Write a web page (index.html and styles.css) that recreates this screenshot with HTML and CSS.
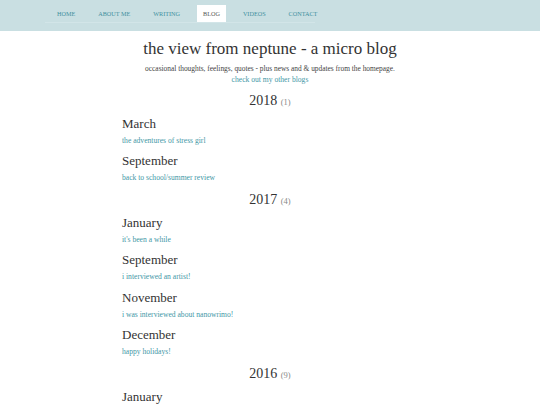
FILE: index.html
```html
<!DOCTYPE html>
<html>
<head>
<meta charset="utf-8">
<link rel="stylesheet" href="styles.css">
</head>
<body>
<div class="navbar">
  <ul class="nav">
    <li><a href="#">Home</a></li>
    <li><a href="#">About me</a></li>
    <li><a href="#">Writing</a></li>
    <li class="active"><a href="#">Blog</a></li>
    <li><a href="#">Videos</a></li>
    <li><a href="#">Contact</a></li>
  </ul>
</div>
<header class="head">
  <h1 class="title">the view from neptune - a micro blog</h1>
  <p class="sub">occasional thoughts, feelings, quotes - plus news and &amp; updates from the homepage.</p>
  <a class="other" href="#">check out my other blogs</a>
</header>
<main class="archive">
  <h2 class="year">2018 <span class="count">(1)</span></h2>
  <h3 class="month">March</h3>
  <a class="post" href="#">the adventures of stress girl</a>
  <h3 class="month">September</h3>
  <a class="post" href="#">back to school/summer review</a>

  <h2 class="year">2017 <span class="count">(4)</span></h2>
  <h3 class="month">January</h3>
  <a class="post" href="#">it's been a while</a>
  <h3 class="month">September</h3>
  <a class="post" href="#">i interviewed an artist!</a>
  <h3 class="month">November</h3>
  <a class="post" href="#">i was interviewed about nanowrimo!</a>
  <h3 class="month">December</h3>
  <a class="post" href="#">happy holidays!</a>

  <h2 class="year">2016 <span class="count">(9)</span></h2>
  <h3 class="month">January</h3>
</main>
</body>
</html>
```
FILE: styles.css
```css
html, body { margin: 0; padding: 0; background: #fff; }
body { font-family: "Liberation Serif", "DejaVu Serif", serif; color: #333; }
a { text-decoration: none; color: #3f97a6; }

.navbar { background: #c9dfe2; height: 31px; }
.nav { list-style: none; margin: 0 0 0 45px; padding: 5px 0 0 6px; width: 264px; display: flex; gap: 11px; border-bottom: 1px solid #d2e5e8; height: 17px; }
.nav li { height: 17px; display: flex; align-items: center; flex-shrink: 0; white-space: nowrap; }
.nav li a { display: block; padding: 0 6px; font-size: 6.2px; text-transform: uppercase; color: #3f8f9e; line-height: 17px; }
.nav li.active { background: #fff; }
.nav li.active a { color: #555; }

.head { text-align: center; padding-top: 7px; }
.title { font-weight: normal; font-size: 17px; margin: 0; line-height: 22px; color: #333; }
.sub { font-size: 7.4px; margin: 2.5px 0 0; line-height: 11px; color: #444; }
.other { font-size: 7.6px; line-height: 11px; display: block; }

.archive { width: 296px; margin: 0 auto; display: flex; flex-direction: column; align-items: flex-start; }
.year { align-self: center; font-weight: normal; font-size: 14px; margin: 8px 0 0; line-height: 18px; color: #333; }
.archive .year:first-child { margin-top: 7.5px; }
.count { font-size: 8.5px; color: #888; }
.month { font-weight: normal; font-size: 13px; margin: 6.5px 0 0; line-height: 18px; color: #333; }
.post { font-size: 7.6px; line-height: 11px; margin-top: 2px; }
.year + .month { margin-top: 3.5px; }
```
